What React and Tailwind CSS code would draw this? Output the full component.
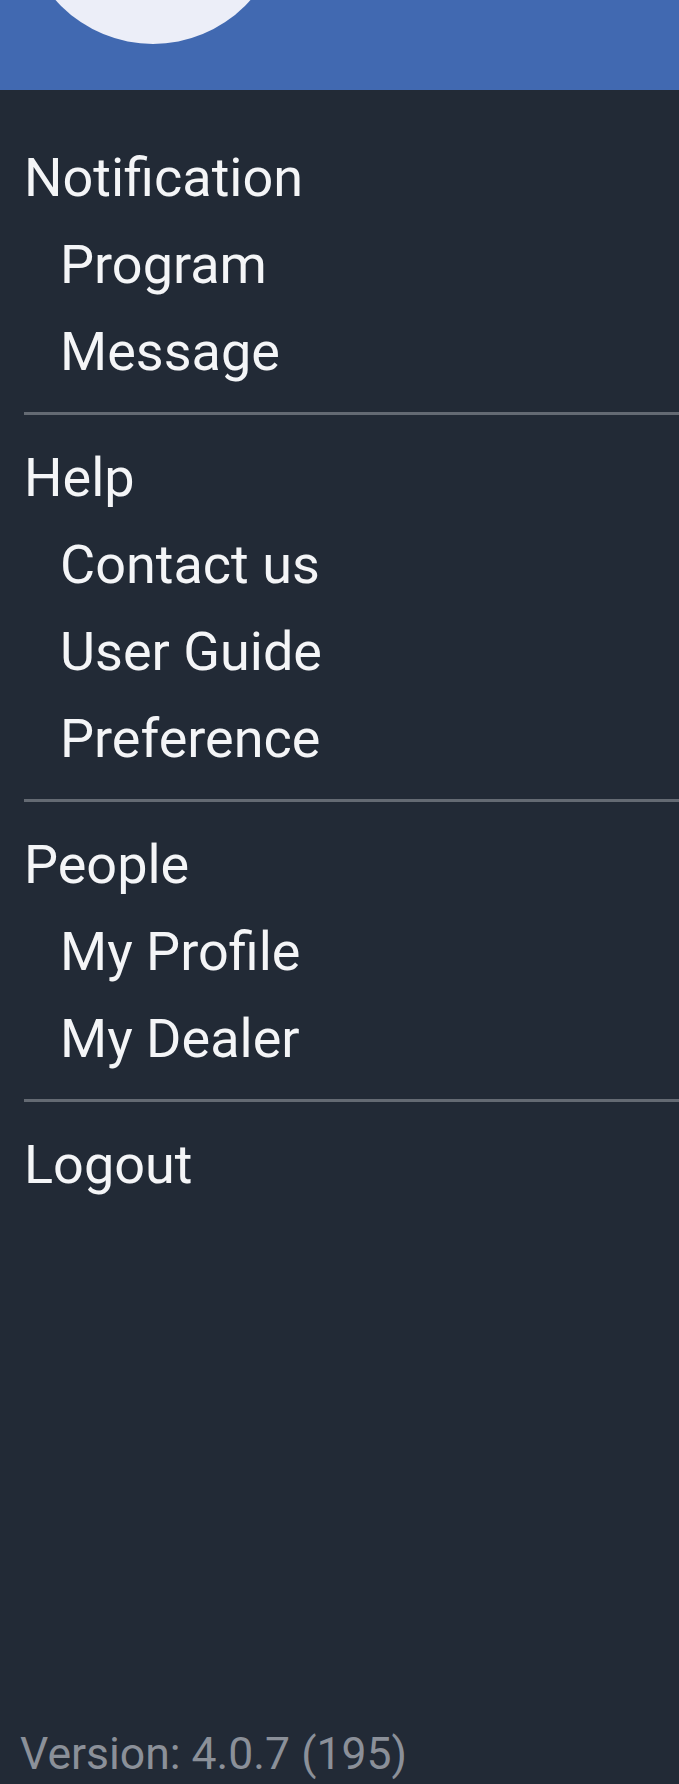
import React from 'react';

const sections = [
    { title: 'Notification', items: ['Program', 'Message'] },
    { title: 'Help', items: ['Contact us', 'User Guide', 'Preference'] },
    { title: 'People', items: ['My Profile', 'My Dealer'] },
];

const App = () => {
    return (
        <div
            className="flex min-h-[1784px] w-full flex-col overflow-hidden bg-[#222a36] text-[#f4f5f7]"
            style={{ fontFamily: 'Roboto, "Noto Sans", sans-serif' }}
        >
            {/* header with avatar */}
            <div className="relative h-[90px] w-full shrink-0 overflow-hidden bg-[#4169b1]">
                <div className="absolute left-[23px] top-[-216px] h-[260px] w-[260px] rounded-full bg-[#eceef8]"></div>
            </div>

            {/* menu */}
            <nav className="pl-6 pt-[44px]">
                {sections.map((section) => (
                    <div key={section.title}>
                        <div className="text-[54px] leading-[87px]">{section.title}</div>
                        {section.items.map((item) => (
                            <div key={item} className="pl-9 text-[54px] leading-[87px]">
                                {item}
                            </div>
                        ))}
                        <div className="mb-[19px] mt-[17px] h-[3px] bg-[#646a73]"></div>
                    </div>
                ))}
                <div className="text-[54px] leading-[87px]">Logout</div>
            </nav>

            {/* version */}
            <div className="mt-auto pb-[3px] pl-5 text-[44.5px] leading-[54px] text-[#8b9099]">
                Version: 4.0.7 (195)
            </div>
        </div>
    );
};

export default App;
